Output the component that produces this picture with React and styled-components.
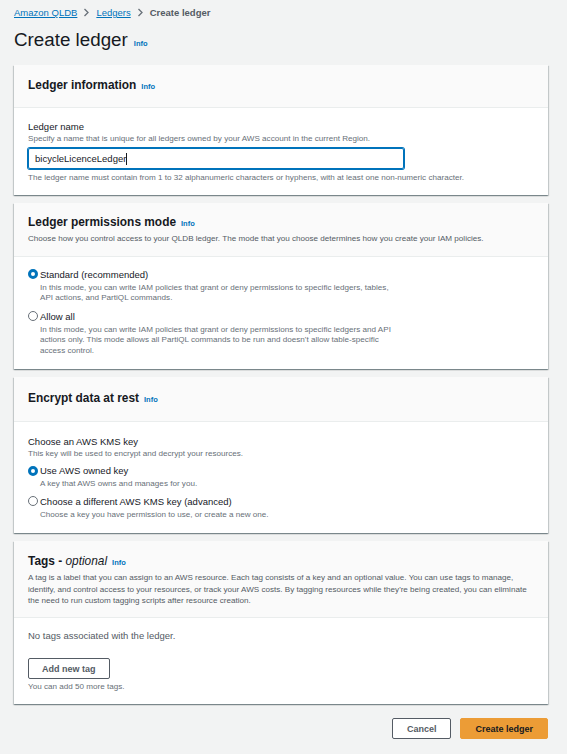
import styled, { createGlobalStyle } from 'styled-components'

const GlobalStyle = createGlobalStyle`
    body {
        margin: 0;
        background: #f2f3f3;
        font-family: "Liberation Sans", Arial, sans-serif;
        color: #16191f;
    }
`

const Page = styled.div`
    padding: 5px 19px 13px 14px;
`

const Crumbs = styled.nav`
    display: flex;
    align-items: center;
    gap: 6px;
    height: 15px;
    font-size: 9.5px;

    a {
        color: #0073bb;
        text-decoration: underline;
    }

    .current {
        color: #545b64;
        font-weight: bold;
    }
`

const Chevron = () => (
    <svg width="7" height="9" viewBox="0 0 7 9">
        <path d="M1.5 1 L5 4.5 L1.5 8" fill="none" stroke="#687078" strokeWidth="1.3" />
    </svg>
)

const Heading = styled.div`
    display: flex;
    align-items: baseline;
    gap: 6px;
    margin: 8px 0 13px;

    h1 {
        margin: 0;
        font-size: 18.8px;
        font-weight: normal;
        line-height: 24px;
    }
`

const Info = styled.a`
    color: #0073bb;
    font-size: 7.5px;
    font-weight: bold;
`

const Stack = styled.div`
    display: flex;
    flex-direction: column;
    gap: 8px;
`

const Panel = styled.section`
    background: #fff;
    box-shadow: 0 1px 1px 0 rgba(0, 28, 36, .3), 1px 1px 1px 0 rgba(0, 28, 36, .15), -1px 1px 1px 0 rgba(0, 28, 36, .15);
`

const PanelHeader = styled.header`
    background: #fafafa;
    border-bottom: 1px solid #eaeded;
    padding: ${p => p.$pad || '13px 14px'};

    h2 {
        margin: 0;
        font-size: 11.9px;
        line-height: 15px;
        display: flex;
        align-items: baseline;
        gap: 5px;
    }

    h2 i {
        font-weight: normal;
    }

    p {
        margin: 2px 0 0;
        font-size: 8.1px;
        line-height: 11.5px;
        color: #545b64;
    }
`

const PanelBody = styled.div`
    padding: ${p => p.$pad || '13px 14px 14px'};
`

const Label = styled.div`
    font-size: 9.5px;
    line-height: 13px;
`

const Hint = styled.div`
    font-size: 8.1px;
    line-height: 11px;
    color: #687078;
    margin-top: ${p => p.$top || '0'};
`

const Input = styled.div`
    margin: 4px 0 3px;
    width: 376px;
    height: 21px;
    box-sizing: border-box;
    border: 1px solid #0073bb;
    box-shadow: 0 0 0 1px #0073bb;
    border-radius: 2px;
    display: flex;
    align-items: center;
    padding: 0 6px;
    font-size: 9.5px;

    .caret {
        width: 1px;
        height: 12px;
        background: #16191f;
    }
`

const RadioGroup = styled.div`
    display: flex;
    flex-direction: column;
    gap: ${p => p.$gap || '6px'};
    margin-top: ${p => p.$top || '0'};
`

const RadioRow = styled.div`
    display: grid;
    grid-template-columns: 12px 1fr;
    align-items: center;
`

const Dot = styled.span`
    width: 10px;
    height: 10px;
    box-sizing: border-box;
    border-radius: 50%;
    border: ${p => p.$on ? '3px solid #0073bb' : '1px solid #687078'};
    background: #fff;
`

const RadioText = styled.div`
    font-size: 9.5px;
    line-height: 13px;
`

const RadioDesc = styled.div`
    grid-column: 2;
    font-size: 8.1px;
    line-height: 10.5px;
    color: #687078;
    max-width: ${p => p.$max || 'none'};
    margin-top: 2px;
`

const Muted = styled.div`
    font-size: 9.5px;
    line-height: 13px;
    color: #545b64;
`

const Button = styled.button`
    font-family: inherit;
    font-size: 9px;
    font-weight: bold;
    height: 21px;
    padding: 0 ${p => p.$px || '14px'};
    box-sizing: border-box;
    border-radius: 2px;
    cursor: pointer;
    background: ${p => p.$primary ? '#ec9c36' : '#fff'};
    border: 1px solid ${p => p.$primary ? '#ec9c36' : '#545b64'};
    color: ${p => p.$primary ? '#16191f' : '#545b64'};
`

const Footer = styled.div`
    display: flex;
    justify-content: flex-end;
    gap: 9px;
    margin-top: 14px;
`

function Radio({ on, label, desc, max }) {
    return (
        <RadioRow>
            <Dot $on={on} />
            <RadioText>{label}</RadioText>
            <RadioDesc $max={max}>{desc}</RadioDesc>
        </RadioRow>
    )
}

export default function App() {
    return (
        <Page>
            <GlobalStyle />
            <Crumbs>
                <a>Amazon QLDB</a>
                <Chevron />
                <a>Ledgers</a>
                <Chevron />
                <span className='current'>Create ledger</span>
            </Crumbs>
            <Heading>
                <h1>Create ledger</h1>
                <Info>Info</Info>
            </Heading>

            <Stack>
                <Panel>
                    <PanelHeader>
                        <h2>Ledger information <Info>Info</Info></h2>
                    </PanelHeader>
                    <PanelBody $pad='12px 14px 12px'>
                        <Label>Ledger name</Label>
                        <Hint>Specify a name that is unique for all ledgers owned by your AWS account in the current Region.</Hint>
                        <Input>bicycleLicenceLedger<span className='caret' /></Input>
                        <Hint>The ledger name must contain from 1 to 32 alphanumeric characters or hyphens, with at least one non-numeric character.</Hint>
                    </PanelBody>
                </Panel>

                <Panel>
                    <PanelHeader $pad='12px 14px 11px'>
                        <h2>Ledger permissions mode <Info>Info</Info></h2>
                        <p>Choose how you control access to your QLDB ledger. The mode that you choose determines how you create your IAM policies.</p>
                    </PanelHeader>
                    <PanelBody $pad='11px 14px 13px'>
                        <RadioGroup $gap='6px'>
                            <Radio
                                on
                                label='Standard (recommended)'
                                max='360px'
                                desc='In this mode, you can write IAM policies that grant or deny permissions to specific ledgers, tables, API actions, and PartiQL commands.'
                            />
                            <Radio
                                label='Allow all'
                                max='360px'
                                desc="In this mode, you can write IAM policies that grant or deny permissions to specific ledgers and API actions only. This mode allows all PartiQL commands to be run and doesn't allow table-specific access control."
                            />
                        </RadioGroup>
                    </PanelBody>
                </Panel>

                <Panel>
                    <PanelHeader $pad='14px 14px 14px'>
                        <h2>Encrypt data at rest <Info>Info</Info></h2>
                    </PanelHeader>
                    <PanelBody $pad='13px 14px 13px'>
                        <Label>Choose an AWS KMS key</Label>
                        <Hint>This key will be used to encrypt and decrypt your resources.</Hint>
                        <RadioGroup $gap='5px' $top='5px'>
                            <Radio on label='Use AWS owned key' desc='A key that AWS owns and manages for you.' />
                            <Radio label='Choose a different AWS KMS key (advanced)' desc='Choose a key you have permission to use, or create a new one.' />
                        </RadioGroup>
                    </PanelBody>
                </Panel>

                <Panel>
                    <PanelHeader $pad='13px 14px 10px'>
                        <h2><span>Tags - <i>optional</i></span> <Info>Info</Info></h2>
                        <p>A tag is a label that you can assign to an AWS resource. Each tag consists of a key and an optional value. You can use tags to manage, identify, and control access to your resources, or track your AWS costs. By tagging resources while they're being created, you can eliminate the need to run custom tagging scripts after resource creation.</p>
                    </PanelHeader>
                    <PanelBody $pad='11px 14px 12px'>
                        <Muted>No tags associated with the ledger.</Muted>
                        <div style={{ marginTop: 16 }}>
                            <Button $px='13px'>Add new tag</Button>
                        </div>
                        <Hint $top='2px'>You can add 50 more tags.</Hint>
                    </PanelBody>
                </Panel>
            </Stack>

            <Footer>
                <Button>Cancel</Button>
                <Button $primary>Create ledger</Button>
            </Footer>
        </Page>
    )
}
